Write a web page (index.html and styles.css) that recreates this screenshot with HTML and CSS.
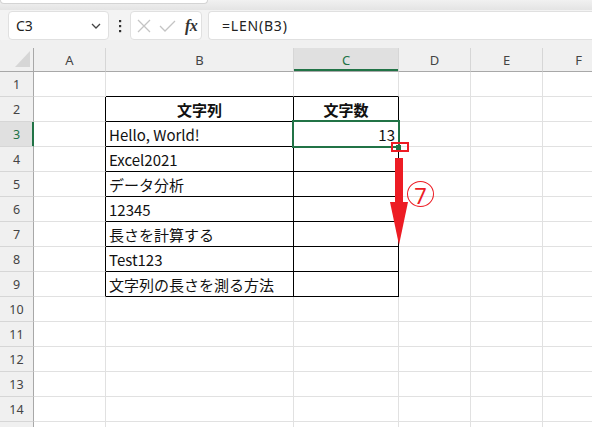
FILE: index.html
```html
<!DOCTYPE html>
<html lang="ja">
<head>
<meta charset="utf-8">
<title>LEN</title>
<link rel="stylesheet" href="styles.css">
</head>
<body>
<div class="app">
  <div class="topstrip"><div class="ribbon-edge"></div></div>
  <div class="fbar">
    <div class="namebox">
      <span class="nb-text">C3</span>
      <svg class="chev" width="10" height="6" viewBox="0 0 10 6"><path d="M1 1l4 4 4-4" fill="none" stroke="#444" stroke-width="1.3"/></svg>
    </div>
    <svg class="dots" width="4" height="14" viewBox="0 0 4 14"><rect x="1" y="1" width="2.2" height="2.2" fill="#333"/><rect x="1" y="6" width="2.2" height="2.2" fill="#333"/><rect x="1" y="11" width="2.2" height="2.2" fill="#333"/></svg>
    <div class="fxbox">
      <svg class="ico-x" width="14" height="14" viewBox="0 0 14 14"><path d="M1 1l12 12M13 1L1 13" stroke="#c4c4c4" stroke-width="1.3" fill="none"/></svg>
      <svg class="ico-ok" width="17" height="12" viewBox="0 0 17 12"><path d="M1 6l5 5L16 1" stroke="#c4c4c4" stroke-width="1.3" fill="none"/></svg>
      <span class="fx">fx</span>
    </div>
    <div class="formula">=LEN(B3)</div>
  </div>
  <div class="gap"></div>
  <div class="sheet">
    <div class="grid">
      <div class="corner"><svg width="34" height="24" viewBox="0 0 34 24"><path d="M30 3V19H15Z" fill="#d6d6d6"/></svg></div>
      <div class="ch">A</div><div class="ch">B</div><div class="ch sel">C</div><div class="ch">D</div><div class="ch">E</div><div class="ch">F</div>

      <div class="rh">1</div><div class="c"></div><div class="c tt"></div><div class="c tt"></div><div class="c"></div><div class="c"></div><div class="c"></div>
      <div class="rh">2</div><div class="c tl"></div><div class="c tb hd">文字列</div><div class="c tb hd">文字数</div><div class="c"></div><div class="c"></div><div class="c"></div>
      <div class="rh sel">3</div><div class="c tl"></div><div class="c tb">Hello, World!</div><div class="c tb num">13</div><div class="c"></div><div class="c"></div><div class="c"></div>
      <div class="rh">4</div><div class="c tl"></div><div class="c tb">Excel2021</div><div class="c tb"></div><div class="c"></div><div class="c"></div><div class="c"></div>
      <div class="rh">5</div><div class="c tl"></div><div class="c tb">データ分析</div><div class="c tb"></div><div class="c"></div><div class="c"></div><div class="c"></div>
      <div class="rh">6</div><div class="c tl"></div><div class="c tb">12345</div><div class="c tb"></div><div class="c"></div><div class="c"></div><div class="c"></div>
      <div class="rh">7</div><div class="c tl"></div><div class="c tb">長さを計算する</div><div class="c tb"></div><div class="c"></div><div class="c"></div><div class="c"></div>
      <div class="rh">8</div><div class="c tl"></div><div class="c tb">Test123</div><div class="c tb"></div><div class="c"></div><div class="c"></div><div class="c"></div>
      <div class="rh">9</div><div class="c tl"></div><div class="c tb">文字列の長さを測る方法</div><div class="c tb"></div><div class="c"></div><div class="c"></div><div class="c"></div>
      <div class="rh">10</div><div class="c"></div><div class="c"></div><div class="c"></div><div class="c"></div><div class="c"></div><div class="c"></div>
      <div class="rh">11</div><div class="c"></div><div class="c"></div><div class="c"></div><div class="c"></div><div class="c"></div><div class="c"></div>
      <div class="rh">12</div><div class="c"></div><div class="c"></div><div class="c"></div><div class="c"></div><div class="c"></div><div class="c"></div>
      <div class="rh">13</div><div class="c"></div><div class="c"></div><div class="c"></div><div class="c"></div><div class="c"></div><div class="c"></div>
      <div class="rh">14</div><div class="c"></div><div class="c"></div><div class="c"></div><div class="c"></div><div class="c"></div><div class="c"></div>
      <div class="rh"></div><div class="c"></div><div class="c"></div><div class="c"></div><div class="c"></div><div class="c"></div><div class="c"></div>
    </div>
    <div class="selbox"></div>
    <div class="handle"></div>
    <div class="redbox"></div>
    <svg class="arrow" width="22" height="92" viewBox="0 0 22 92"><rect x="7" y="3" width="8" height="45" fill="#ed1c24"/><path d="M2 47H20L11 90Z" fill="#ed1c24"/></svg>
    <span class="step">7</span>
  </div>
</div>
</body>
</html>
```

FILE: styles.css
```css
html, body {
  margin: 0;
  padding: 0;
  background: #f3f3f3;
  overflow: hidden;
}
.app {
  width: 592px;
  height: 427px;
  overflow: hidden;
  font-family: "Noto Sans", "Open Sans", sans-serif;
  color: #222;
}
.topstrip {
  height: 10px;
  background: linear-gradient(#f1f1f1, #e4e4e4);
  position: relative;
}
.ribbon-edge {
  width: 206px;
  height: 3px;
  background: #fff;
  border: 1px solid #d4d4d4;
  border-top: none;
  border-radius: 0 0 5px 5px;
}
.fbar {
  height: 30px;
  box-sizing: border-box;
  padding: 1px 0 0 8px;
  display: flex;
  align-items: stretch;
  background: #f3f3f3;
}
.namebox {
  width: 101px;
  box-sizing: border-box;
  background: #fff;
  border: 1px solid #e0e0e0;
  border-radius: 4px;
  display: flex;
  align-items: center;
  justify-content: space-between;
  padding: 0 7px 0 7px;
}
.nb-text {
  font-size: 14px;
  color: #222;
}
.chev { margin-top: 1px; }
.dots {
  align-self: center;
  margin: 0 8px 0 9px;
}
.fxbox {
  width: 72px;
  box-sizing: border-box;
  background: #fff;
  border: 1px solid #e0e0e0;
  border-radius: 4px;
  display: flex;
  align-items: center;
  padding-left: 6px;
}
.ico-x { margin-right: 8px; }
.ico-ok { margin-right: 9px; }
.fx {
  font-family: "Liberation Serif", serif;
  font-style: italic;
  font-weight: bold;
  font-size: 16px;
  color: #333;
  letter-spacing: -0.5px;
}
.formula {
  flex: 1;
  margin-left: 6px;
  background: #fff;
  border: 1px solid #e0e0e0;
  border-right: none;
  border-radius: 4px 0 0 4px;
  font-size: 14px;
  letter-spacing: 0.8px;
  padding-left: 13px;
  display: flex;
  align-items: center;
  color: #222;
}
.gap {
  height: 8px;
  background: #f0f0f0;
}
.sheet {
  position: relative;
  background: #fff;
}
.grid {
  display: grid;
  grid-template-columns: 34px 72px 188px 105px 72px 72px 72px;
  grid-template-rows: 24px;
  grid-auto-rows: 25px;
}
.grid > div {
  box-sizing: border-box;
  overflow: hidden;
  white-space: nowrap;
}
.corner {
  background: #f0f0f0;
  border-right: 1px solid #a8a8a8;
  border-bottom: 1px solid #a8a8a8;
}
.corner svg { display: block; }
.ch {
  background: #f0f0f0;
  border-right: 1px solid #d6d6d6;
  border-bottom: 1px solid #a8a8a8;
  font-size: 13px;
  color: #444;
  display: flex;
  align-items: center;
  justify-content: center;
}
.ch.sel {
  background: #e0e0e0;
  color: #217346;
  box-shadow: inset 0 -2px 0 #217346;
}
.rh {
  background: #f0f0f0;
  border-right: 1px solid #a8a8a8;
  border-bottom: 1px solid #d6d6d6;
  font-size: 12.5px;
  color: #444;
  display: flex;
  align-items: center;
  justify-content: center;
}
.rh.sel {
  background: #e0e0e0;
  color: #217346;
  border-right-color: #217346;
  box-shadow: inset -1px 0 0 #217346;
}
.c {
  border-right: 1px solid #e1e1e1;
  border-bottom: 1px solid #e1e1e1;
  font-family: "Noto Sans CJK JP", "Noto Sans", sans-serif;
  font-size: 15px;
  color: #111;
  display: flex;
  align-items: center;
  padding: 0 3px;
}
.c.tt { border-bottom-color: #000; }
.c.tl { border-right-color: #000; }
.c.tb {
  border-right-color: #000;
  border-bottom-color: #000;
}
.c.hd {
  font-weight: bold;
  justify-content: center;
}
.c.num { justify-content: flex-end; }

.selbox {
  position: absolute;
  left: 292px;
  top: 72px;
  width: 108px;
  height: 28px;
  box-sizing: border-box;
  border: 2px solid #217346;
}
.handle {
  position: absolute;
  left: 396px;
  top: 97px;
  width: 5px;
  height: 5px;
  background: #217346;
}
.redbox {
  position: absolute;
  left: 391px;
  top: 94px;
  width: 18px;
  height: 10px;
  box-sizing: border-box;
  border: 2px solid #ed1c24;
}
.arrow {
  position: absolute;
  left: 388px;
  top: 107px;
}
.step {
  position: absolute;
  left: 407px;
  top: 133px;
  width: 27px;
  height: 26px;
  box-sizing: border-box;
  border: 1.7px solid #ed1c24;
  border-radius: 50%;
  display: flex;
  align-items: center;
  justify-content: center;
  font-family: "Noto Sans", sans-serif;
  font-size: 22px;
  line-height: 1;
  color: #ed1c24;
  padding-top: 1px;
}
```
